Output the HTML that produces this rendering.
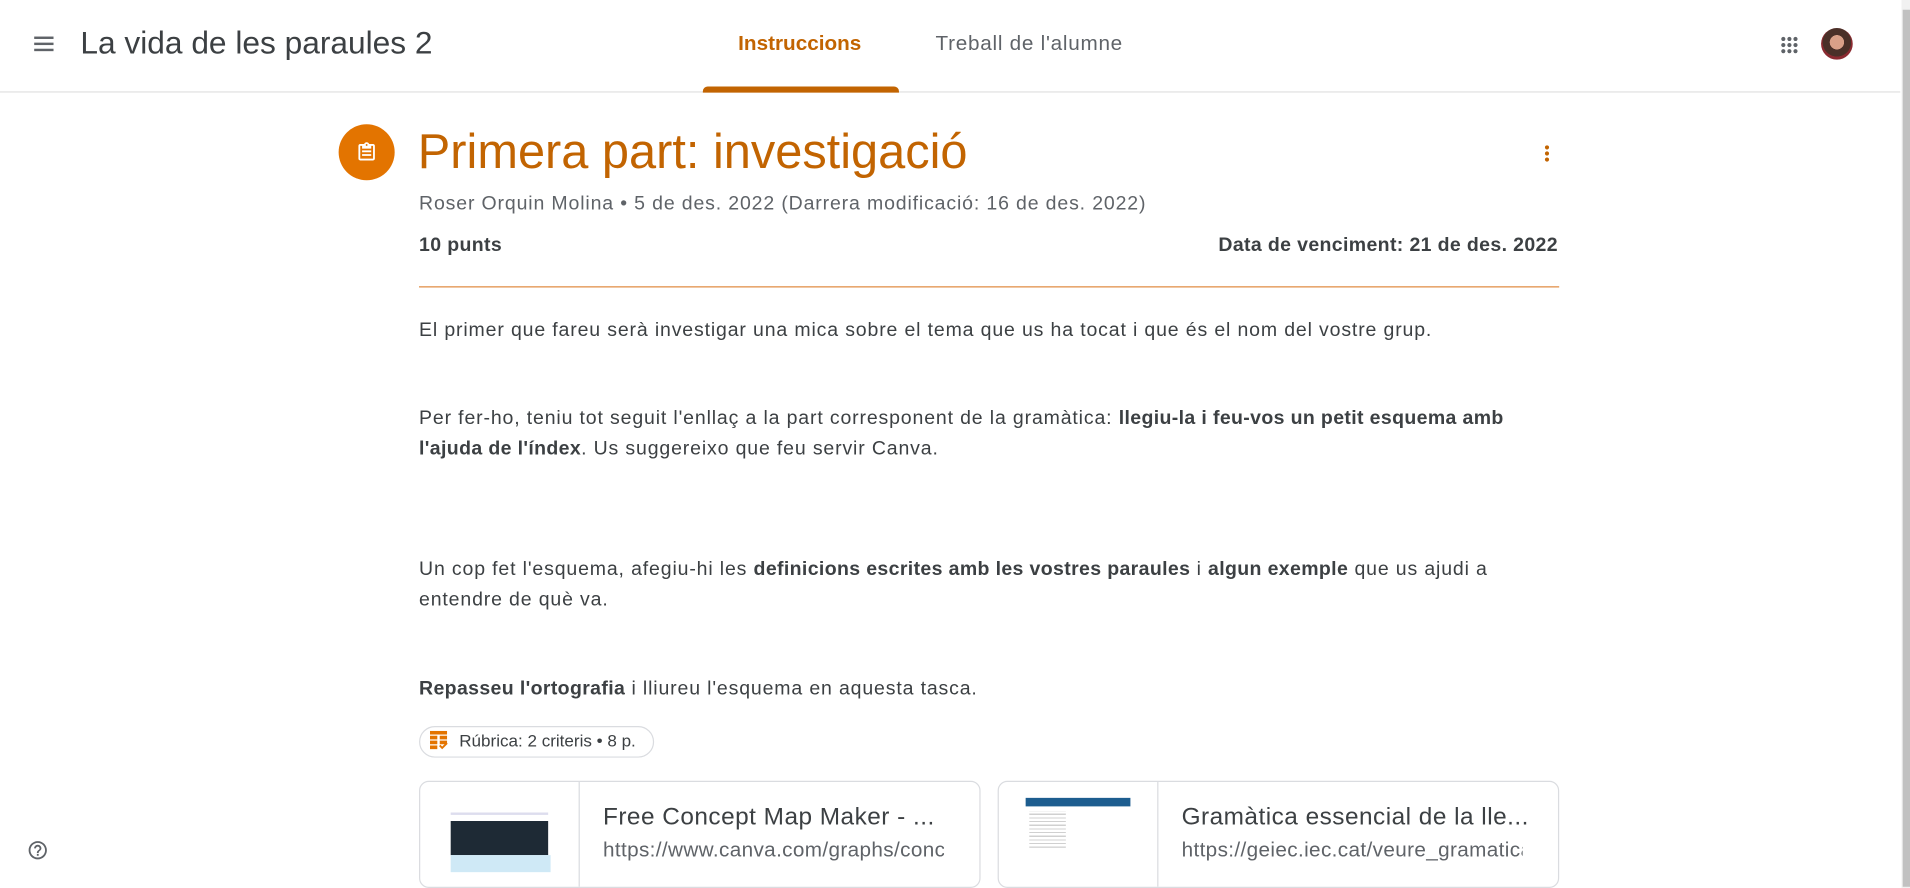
<!DOCTYPE html>
<html><head><meta charset="utf-8"><style>
html,body{margin:0;padding:0;background:#fff;overflow:hidden;width:1910px;height:888px}
#w{position:absolute;left:0;top:0;width:1568px;height:729px;transform:scale(1.21811);transform-origin:0 0;font-family:"Liberation Sans",Arial,sans-serif;color:#3c4043}
.a{position:absolute;white-space:nowrap}
p{margin:0}
b{font-weight:bold}
</style></head><body><div id="w">
<div class="a" style="left:0;top:75px;width:1560px;height:1px;background:#e0e0e0"></div>
<svg class="a" style="left:28px;top:29px" width="16" height="14"><rect x="0" y="1" width="16" height="2" fill="#5f6368"/><rect x="0" y="6" width="16" height="2" fill="#5f6368"/><rect x="0" y="11" width="16" height="2" fill="#5f6368"/></svg>
<div class="a" style="left:66px;top:20px;font-size:26px;color:#3c4043">La vida de les paraules 2</div>
<div class="a" style="left:606px;top:26px;font-size:17px;color:#c26401;font-weight:bold">Instruccions</div>
<div class="a" style="left:577px;top:71px;width:161px;height:5px;background:#c26401;border-radius:4px 4px 0 0"></div>
<div class="a" style="left:768px;top:26px;font-size:17px;color:#5f6368;letter-spacing:0.6px">Treball de l'alumne</div>
<svg class="a" style="left:1462px;top:30px" width="14" height="14" fill="#5f6368"><circle cx="2" cy="2" r="1.7"/><circle cx="7" cy="2" r="1.7"/><circle cx="12" cy="2" r="1.7"/><circle cx="2" cy="7" r="1.7"/><circle cx="7" cy="7" r="1.7"/><circle cx="12" cy="7" r="1.7"/><circle cx="2" cy="12" r="1.7"/><circle cx="7" cy="12" r="1.7"/><circle cx="12" cy="12" r="1.7"/></svg>
<div class="a" style="left:1495px;top:23px;width:26px;height:26px;border-radius:50%;background:radial-gradient(circle at 50% 45%,#d9a088 0 30%,#4a3028 31% 60%,#8a2a30 61%);overflow:hidden"></div>
<div class="a" style="left:1561px;top:0;width:7px;height:729px;background:#f1f1f1"></div>
<div class="a" style="left:1562px;top:8px;width:6px;height:720px;background:#c1c1c1"></div>
<div class="a" style="left:278px;top:102px;width:46px;height:46px;border-radius:50%;background:#e37400"></div>
<svg class="a" style="left:292px;top:116px" width="18" height="18" viewBox="0 0 24 24" fill="#fff"><path d="M19 3h-4.2C14.4 1.8 13.3 1 12 1s-2.4.8-2.8 2H5c-1.1 0-2 .9-2 2v14c0 1.1.9 2 2 2h14c1.1 0 2-.9 2-2V5c0-1.1-.9-2-2-2zm-7 0c.6 0 1 .4 1 1s-.4 1-1 1-1-.4-1-1 .4-1 1-1zm7 16H5V5h2v3h10V5h2v14zM7 10h10v2H7zm0 4h10v2H7z"/></svg>
<div class="a" style="left:343px;top:103px;font-size:40px;color:#c26401">Primera part: investigació</div>
<svg class="a" style="left:1266px;top:118px" width="8" height="16" fill="#c26401"><circle cx="4" cy="3" r="1.7"/><circle cx="4" cy="8" r="1.7"/><circle cx="4" cy="13" r="1.7"/></svg>
<div class="a" style="left:344px;top:159px;font-size:16px;color:#5f6368;letter-spacing:0.7px">Roser Orquin Molina • 5 de des. 2022 (Darrera modificació: 16 de des. 2022)</div>
<div class="a" style="left:344px;top:193px;font-size:16px;color:#3c4043;font-weight:bold;letter-spacing:0.3px">10 punts</div>
<div class="a" style="right:289px;top:193px;font-size:16px;color:#3c4043;font-weight:bold;letter-spacing:0.3px">Data de venciment: 21 de des. 2022</div>
<div class="a" style="left:344px;top:235px;width:936px;height:1px;background:#e08a40"></div>
<div class="a" style="left:344px;top:259px;width:936px;font-size:16px;line-height:25px;white-space:normal;letter-spacing:0.7px">
<p>El primer que fareu serà investigar una mica sobre el tema que us ha tocat i que és el nom del vostre grup.</p>
<p style="margin-top:47px">Per fer-ho, teniu tot seguit l'enllaç a la part corresponent de la gramàtica: <b style="letter-spacing:0.3px">llegiu-la i feu-vos un petit esquema amb l'ajuda de l'índex</b>. Us suggereixo que feu servir Canva.</p>
<p style="margin-top:74px">Un cop fet l'esquema, afegiu-hi les <b style="letter-spacing:0.3px">definicions escrites amb les vostres paraules</b> i <b style="letter-spacing:0.3px">algun exemple</b> que us ajudi a entendre de què va.</p>
<p style="margin-top:48px"><b style="letter-spacing:0.3px">Repasseu l'ortografia</b> i lliureu l'esquema en aquesta tasca.</p>
</div>
<div class="a" style="left:344px;top:596px;width:191px;height:24px;border:1px solid #dadce0;border-radius:13px"></div>
<svg class="a" style="left:353px;top:600px" width="16" height="17" fill="#e37400"><rect x="0" y="0" width="14" height="3"/><rect x="0" y="4" width="6" height="3"/><rect x="8" y="4" width="6" height="3"/><rect x="0" y="8" width="6" height="3"/><rect x="8" y="8" width="6" height="3"/><rect x="0" y="12" width="6" height="3"/><path d="M8 12l2 2 4-4" stroke="#e37400" stroke-width="1.6" fill="none"/></svg>
<div class="a" style="left:377px;top:600px;font-size:14px;color:#3c4043">Rúbrica: 2 criteris • 8 p.</div>
<div class="a" style="left:344px;top:641px;width:459px;height:86px;border:1px solid #dadce0;border-radius:8px;overflow:hidden">
<div class="a" style="left:130px;top:0;width:1px;height:86px;background:#dadce0"></div>
<div class="a" style="left:23px;top:22px;width:84px;height:48px;background:#fff">
<div class="a" style="left:2px;top:3px;width:80px;height:2px;background:#dde"></div>
<div class="a" style="left:2px;top:10px;width:80px;height:28px;background:#1e2a35"></div>
<div class="a" style="left:2px;top:38px;width:82px;height:14px;background:#cfe9f6"></div></div>
<div class="a" style="left:150px;top:18px;font-size:20px;color:#3c4043;letter-spacing:0.4px">Free Concept Map Maker - ...</div>
<div class="a" style="left:150px;top:46px;width:280px;overflow:hidden;font-size:17px;color:#5f6368;letter-spacing:0.3px">https://www.canva.com/graphs/concept-maps/</div>
</div>
<div class="a" style="left:819px;top:641px;width:459px;height:86px;border:1px solid #dadce0;border-radius:8px;overflow:hidden">
<div class="a" style="left:130px;top:0;width:1px;height:86px;background:#dadce0"></div>
<div class="a" style="left:22px;top:13px;width:86px;height:7px;background:#1d5d8f"></div>
<div class="a" style="left:25px;top:24px;width:30px;height:30px;background:repeating-linear-gradient(#fff 0 2px,#d0d0d0 2px 3px)"></div>
<div class="a" style="left:150px;top:18px;font-size:20px;color:#3c4043;letter-spacing:0.4px">Gramàtica essencial de la lle...</div>
<div class="a" style="left:150px;top:46px;width:280px;overflow:hidden;font-size:17px;color:#5f6368;letter-spacing:0.3px">https://geiec.iec.cat/veure_gramatica</div>
</div>
<svg class="a" style="left:22px;top:689px" width="18" height="18" viewBox="0 0 24 24" fill="#5f6368"><path d="M11 18h2v-2h-2v2zm1-16C6.5 2 2 6.5 2 12s4.5 10 10 10 10-4.5 10-10S17.5 2 12 2zm0 18c-4.4 0-8-3.6-8-8s3.6-8 8-8 8 3.6 8 8-3.6 8-8 8zm0-14c-2.2 0-4 1.8-4 4h2c0-1.1.9-2 2-2s2 .9 2 2c0 2-3 1.8-3 5h2c0-2.3 3-2.5 3-5 0-2.2-1.8-4-4-4z"/></svg>
</div></body></html>
